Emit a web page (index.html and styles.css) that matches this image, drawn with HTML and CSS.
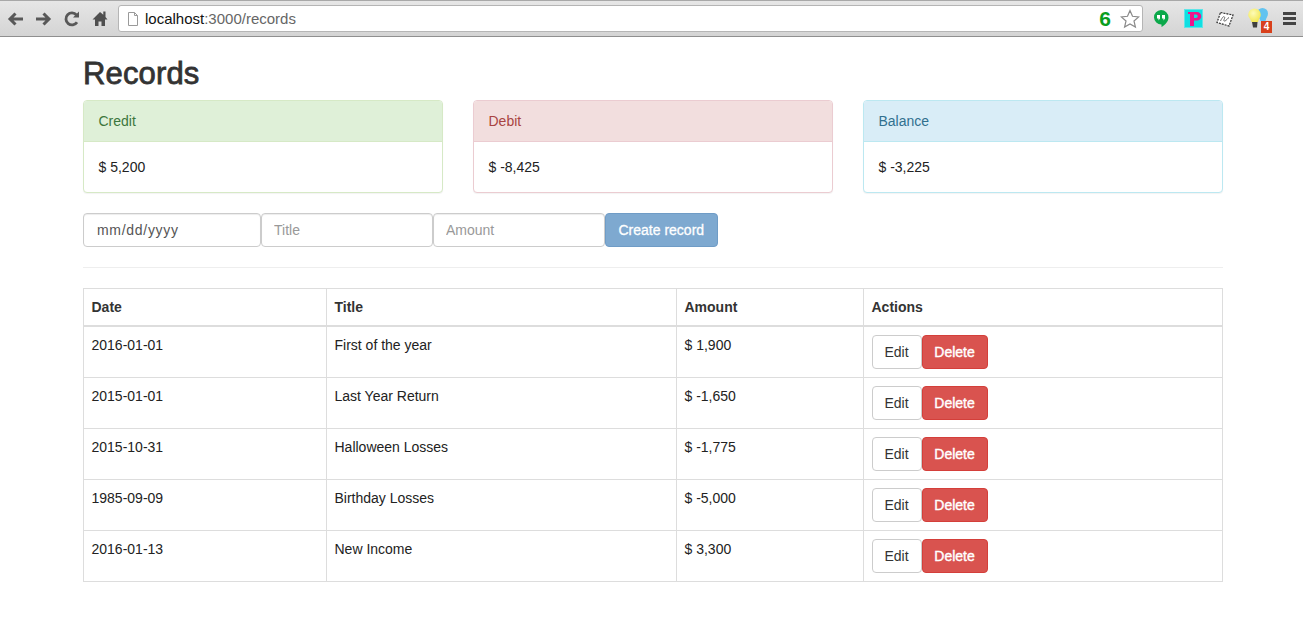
FILE: index.html
```html
<!DOCTYPE html>
<html lang="en">
<head>
    <meta charset="UTF-8">
    <title>Records</title>
    <link rel="stylesheet" href="styles.css">
</head>
<body>
    <div class="toolbar">
        <div class="nav-icons">
            <svg class="nav-icon" viewBox="0 0 18 18"><path d="M16 9H3M8.500 3.500 3 9l5.500 5.500" fill="none" stroke="#585858" stroke-width="3"/></svg>
            <svg class="nav-icon" viewBox="0 0 18 18"><path d="M1 9h13M8.500 3.500 14 9l-5.500 5.500" fill="none" stroke="#585858" stroke-width="3"/></svg>
            <svg class="nav-icon" viewBox="0 0 18 18"><path d="M14 12.200A6 6 0 1 1 13.500 5" fill="none" stroke="#585858" stroke-width="2.800"/><path d="M10 7.500h6v-6z" fill="#585858"/></svg>
            <svg class="nav-icon" viewBox="0 0 18 18"><path d="M9 2 1.500 9.500H4V16h3.500v-4.500h3V16H14V9.500h2.500L14.500 7V1.500h-2.200v3.300z" fill="#4f4f4f"/></svg>
        </div>
        <div class="omnibox">
            <svg class="page-icon" viewBox="0 0 12 14"><path d="M1.500.5h6l3 3v10h-9zM7.500.5v3h3" fill="#fff" stroke="#9a9a9a"/></svg>
            <span class="url">localhost<span class="url-rest">:3000/records</span></span>
            <span class="count">6</span>
            <svg class="star" viewBox="0 0 20 20"><path d="M10 1.500l2.500 5.800 6.200.6-4.700 4.100 1.400 6.100L10 15l-5.400 3.100L6 12 1.300 7.900l6.200-.6z" fill="#fff" stroke="#8a8a8a" stroke-width="1.200"/></svg>
        </div>
        <div class="ext-icons">
            <svg class="ext-hangouts" viewBox="0 0 16 18"><path d="M8 0a7.500 7.500 0 0 1 7.500 7.500c0 4-3.500 7.500-7 9.500v-2.500A7 7 0 0 1 8 0z" fill="#0ba84a"/><path d="M4 5h3v3.500L5.500 10.500V8.500H4zM9 5h3v3.500l-1.500 2V8.500H9z" fill="#fff"/></svg>
            <svg class="ext-pocket" viewBox="0 0 19 19"><rect width="19" height="19" fill="#5fe5e8"/><rect x="1" y="1" width="17" height="17" fill="#10dfe2"/><path d="M4 3h9a4 4 0 0 1 0 8.500h-3V17H6V5H4zM10 5.500V9h2a1.700 1.700 0 0 0 0-3.500z" fill="#f0148c" fill-rule="evenodd"/></svg>
            <svg class="ext-sketch" viewBox="0 0 18 16"><path d="M4.500 1.500 17 4l-4 11L1 11.500z" fill="#fff" stroke="#333" stroke-width="1.200" stroke-dasharray="2 1"/><path d="M4.500 10c2-4 3-5 4-4s-2 4 0 4 3-3 4.500-3.500" stroke="#666" fill="none"/></svg>
            <div class="bulbs">
                <svg class="bulb-svg" viewBox="0 0 24 24">
                    <defs>
                        <radialGradient id="yellowGlass" cx=".4" cy=".35" r=".7">
                            <stop offset="0" stop-color="#fdfbb8"/>
                            <stop offset="1" stop-color="#f2e64e"/>
                        </radialGradient>
                    </defs>
                    <path d="M14.500 1a5.500 5.500 0 0 1 5.500 5.500c0 3-2 4.500-2.500 7.500h-5C12 11 9 9.500 9 6.500A5.500 5.500 0 0 1 14.500 1z" fill="#62c3f0"/>
                    <path d="M13 14h4.500v5H13z" fill="#3c4650"/>
                    <path d="M6.500 1.500a6.300 6.300 0 0 1 6.300 6.300c0 3-2.300 4.200-2.800 7.200H3.500C3 12 .2 10.800.2 7.800a6.300 6.300 0 0 1 6.300-6.300z" fill="url(#yellowGlass)"/>
                    <path d="M4 15h5.500l-.5 5.500H5z" fill="#3f3f3f"/>
                </svg>
                <span class="badge">4</span>
            </div>
            <div class="menu-icon"><span></span><span></span><span></span></div>
        </div>
    </div>

    <div class="container">
        <h2 class="title">Records</h2>

        <div class="cards">
            <div class="panel panel-success">
                <div class="panel-heading">Credit</div>
                <div class="panel-body">$ 5,200</div>
            </div>
            <div class="panel panel-danger">
                <div class="panel-heading">Debit</div>
                <div class="panel-body">$ -8,425</div>
            </div>
            <div class="panel panel-info">
                <div class="panel-heading">Balance</div>
                <div class="panel-body">$ -3,225</div>
            </div>
        </div>

        <form class="record-form">
            <input class="field field-date" type="text" value="mm/dd/yyyy">
            <input class="field" type="text" placeholder="Title">
            <input class="field" type="text" placeholder="Amount">
            <button class="btn btn-primary" type="button">Create record</button>
        </form>

        <hr class="divider">

        <table class="records">
            <thead>
                <tr>
                    <th class="col-date">Date</th>
                    <th class="col-title">Title</th>
                    <th class="col-amount">Amount</th>
                    <th>Actions</th>
                </tr>
            </thead>
            <tbody>
                <tr>
                    <td>2016-01-01</td><td>First of the year</td><td>$ 1,900</td>
                    <td><button class="btn btn-default">Edit</button><button class="btn btn-danger">Delete</button></td>
                </tr>
                <tr>
                    <td>2015-01-01</td><td>Last Year Return</td><td>$ -1,650</td>
                    <td><button class="btn btn-default">Edit</button><button class="btn btn-danger">Delete</button></td>
                </tr>
                <tr>
                    <td>2015-10-31</td><td>Halloween Losses</td><td>$ -1,775</td>
                    <td><button class="btn btn-default">Edit</button><button class="btn btn-danger">Delete</button></td>
                </tr>
                <tr>
                    <td>1985-09-09</td><td>Birthday Losses</td><td>$ -5,000</td>
                    <td><button class="btn btn-default">Edit</button><button class="btn btn-danger">Delete</button></td>
                </tr>
                <tr>
                    <td>2016-01-13</td><td>New Income</td><td>$ 3,300</td>
                    <td><button class="btn btn-default">Edit</button><button class="btn btn-danger">Delete</button></td>
                </tr>
            </tbody>
        </table>
    </div>
</body>
</html>
```

FILE: styles.css
```css
* {
    box-sizing: border-box;
}
body {
    margin: 0;
    font-family: "Liberation Sans", Arial, sans-serif;
    font-size: 14px;
    line-height: 20px;
    color: #333;
    background: #fff;
}

/* browser bar */
.toolbar {
    display: flex;
    align-items: center;
    height: 37px;
    padding: 3px 0 3px 7px;
    background: linear-gradient(#e6e6e6, #d4d4d4);
    border-top: 1px solid #a8a8a8;
    border-bottom: 1px solid #8f8f8f;
}
.nav-icons {
    display: flex;
    gap: 10px;
    width: 111px;
}
.nav-icon {
    width: 18px;
    height: 18px;
}
.omnibox {
    display: flex;
    align-items: center;
    width: 1025px;
    height: 27px;
    padding: 0 2px 0 8px;
    background: #fff;
    border: 1px solid #b5b5b5;
    border-radius: 3px;
}
.page-icon {
    width: 12px;
    height: 14px;
    margin-right: 6px;
}
.url {
    flex: 1;
    font-size: 15px;
    color: #111;
}
.url-rest {
    color: #666;
}
.count {
    margin-right: 9px;
    font-size: 21px;
    font-weight: bold;
    color: #0a9e20;
}
.star {
    width: 20px;
    height: 20px;
}
.ext-icons {
    display: flex;
    align-items: center;
    flex: 1;
    padding-left: 10px;
}
.ext-hangouts {
    width: 16px;
    height: 18px;
    margin-right: 15px;
}
.ext-pocket {
    width: 19px;
    height: 19px;
    margin-right: 13px;
}
.ext-sketch {
    width: 18px;
    height: 16px;
    margin-right: 14px;
}
.bulbs {
    position: relative;
    width: 24px;
    height: 24px;
    margin-right: 11px;
}
.bulb-svg {
    width: 24px;
    height: 24px;
}
.badge {
    position: absolute;
    right: 0;
    bottom: -2px;
    width: 11px;
    height: 12px;
    font-size: 10px;
    line-height: 12px;
    font-weight: bold;
    text-align: center;
    color: #fff;
    background: #d8401c;
}
.menu-icon {
    display: flex;
    flex-direction: column;
    gap: 2px;
    width: 13px;
}
.menu-icon span {
    height: 3px;
    background: #444;
}

/* page */
.container {
    width: 1140px;
    margin-left: 83px;
}
.title {
    margin: 20px 0 9px;
    font-size: 31px;
    line-height: 34px;
    font-weight: normal;
    letter-spacing: .15px;
    -webkit-text-stroke: 0.8px #333;
}
.cards {
    display: grid;
    grid-template-columns: repeat(3, 360px);
    justify-content: space-between;
    margin-bottom: 20px;
}
.panel {
    height: 93px;
    border: 1px solid;
    border-radius: 4px;
    overflow: hidden;
    background: #fff;
    box-shadow: 0 1px 1px rgba(0, 0, 0, .05);
}
.panel-heading {
    height: 41px;
    padding: 10px 14.5px;
    border-bottom: 1px solid;
}
.panel-body {
    padding: 15px 14.5px;
    color: #222;
}
.panel-success {
    border-color: #d6e9c6;
}
.panel-success .panel-heading {
    color: #3c763d;
    background: #dff0d8;
    border-color: #d6e9c6;
}
.panel-danger {
    border-color: #ebccd1;
}
.panel-danger .panel-heading {
    color: #a94442;
    background: #f2dede;
    border-color: #ebccd1;
}
.panel-info {
    border-color: #bce8f1;
}
.panel-info .panel-heading {
    color: #31708f;
    background: #d9edf7;
    border-color: #bce8f1;
}

.record-form {
    display: flex;
    height: 34px;
}
.field {
    width: 172px;
    height: 34px;
    padding: 6px 12px;
    font: inherit;
    color: #555;
    border: 1px solid #ccc;
    border-radius: 4px;
    box-shadow: inset 0 1px 1px rgba(0, 0, 0, .075);
}
.field::placeholder {
    color: #999;
}
.field-date {
    width: 178px;
    padding-left: 13px;
    letter-spacing: .7px;
}
.btn {
    height: 34px;
    padding: 6px 12px;
    font: inherit;
    border: 1px solid transparent;
    border-radius: 4px;
}
.btn-primary {
    padding: 6px 12.5px;
    color: #fff;
    background: #7ea9d0;
    border-color: #6f9cc6;
    -webkit-text-stroke: 0.3px #fff;
}
.btn-default {
    width: 50px;
    padding: 6px 0;
    color: #333;
    background: #fff;
    border-color: #ccc;
}
.btn-danger {
    width: 66px;
    padding: 6px 0;
    color: #fff;
    background: #d9534f;
    border-color: #d43f3a;
    -webkit-text-stroke: 0.4px #fff;
}
.divider {
    height: 1px;
    margin: 20px 0;
    border: 0;
    background: #eee;
}

.records {
    width: 100%;
    table-layout: fixed;
    border-collapse: collapse;
}
.records th,
.records td {
    padding: 8px 7.5px;
    text-align: left;
    vertical-align: top;
    border: 1px solid #ddd;
}
.records th {
    height: 37px;
    color: #333;
    border-bottom-width: 2px;
}
.records td {
    height: 51px;
    color: #222;
}
.col-date {
    width: 243px;
}
.col-title {
    width: 350px;
}
.col-amount {
    width: 187px;
}
```
